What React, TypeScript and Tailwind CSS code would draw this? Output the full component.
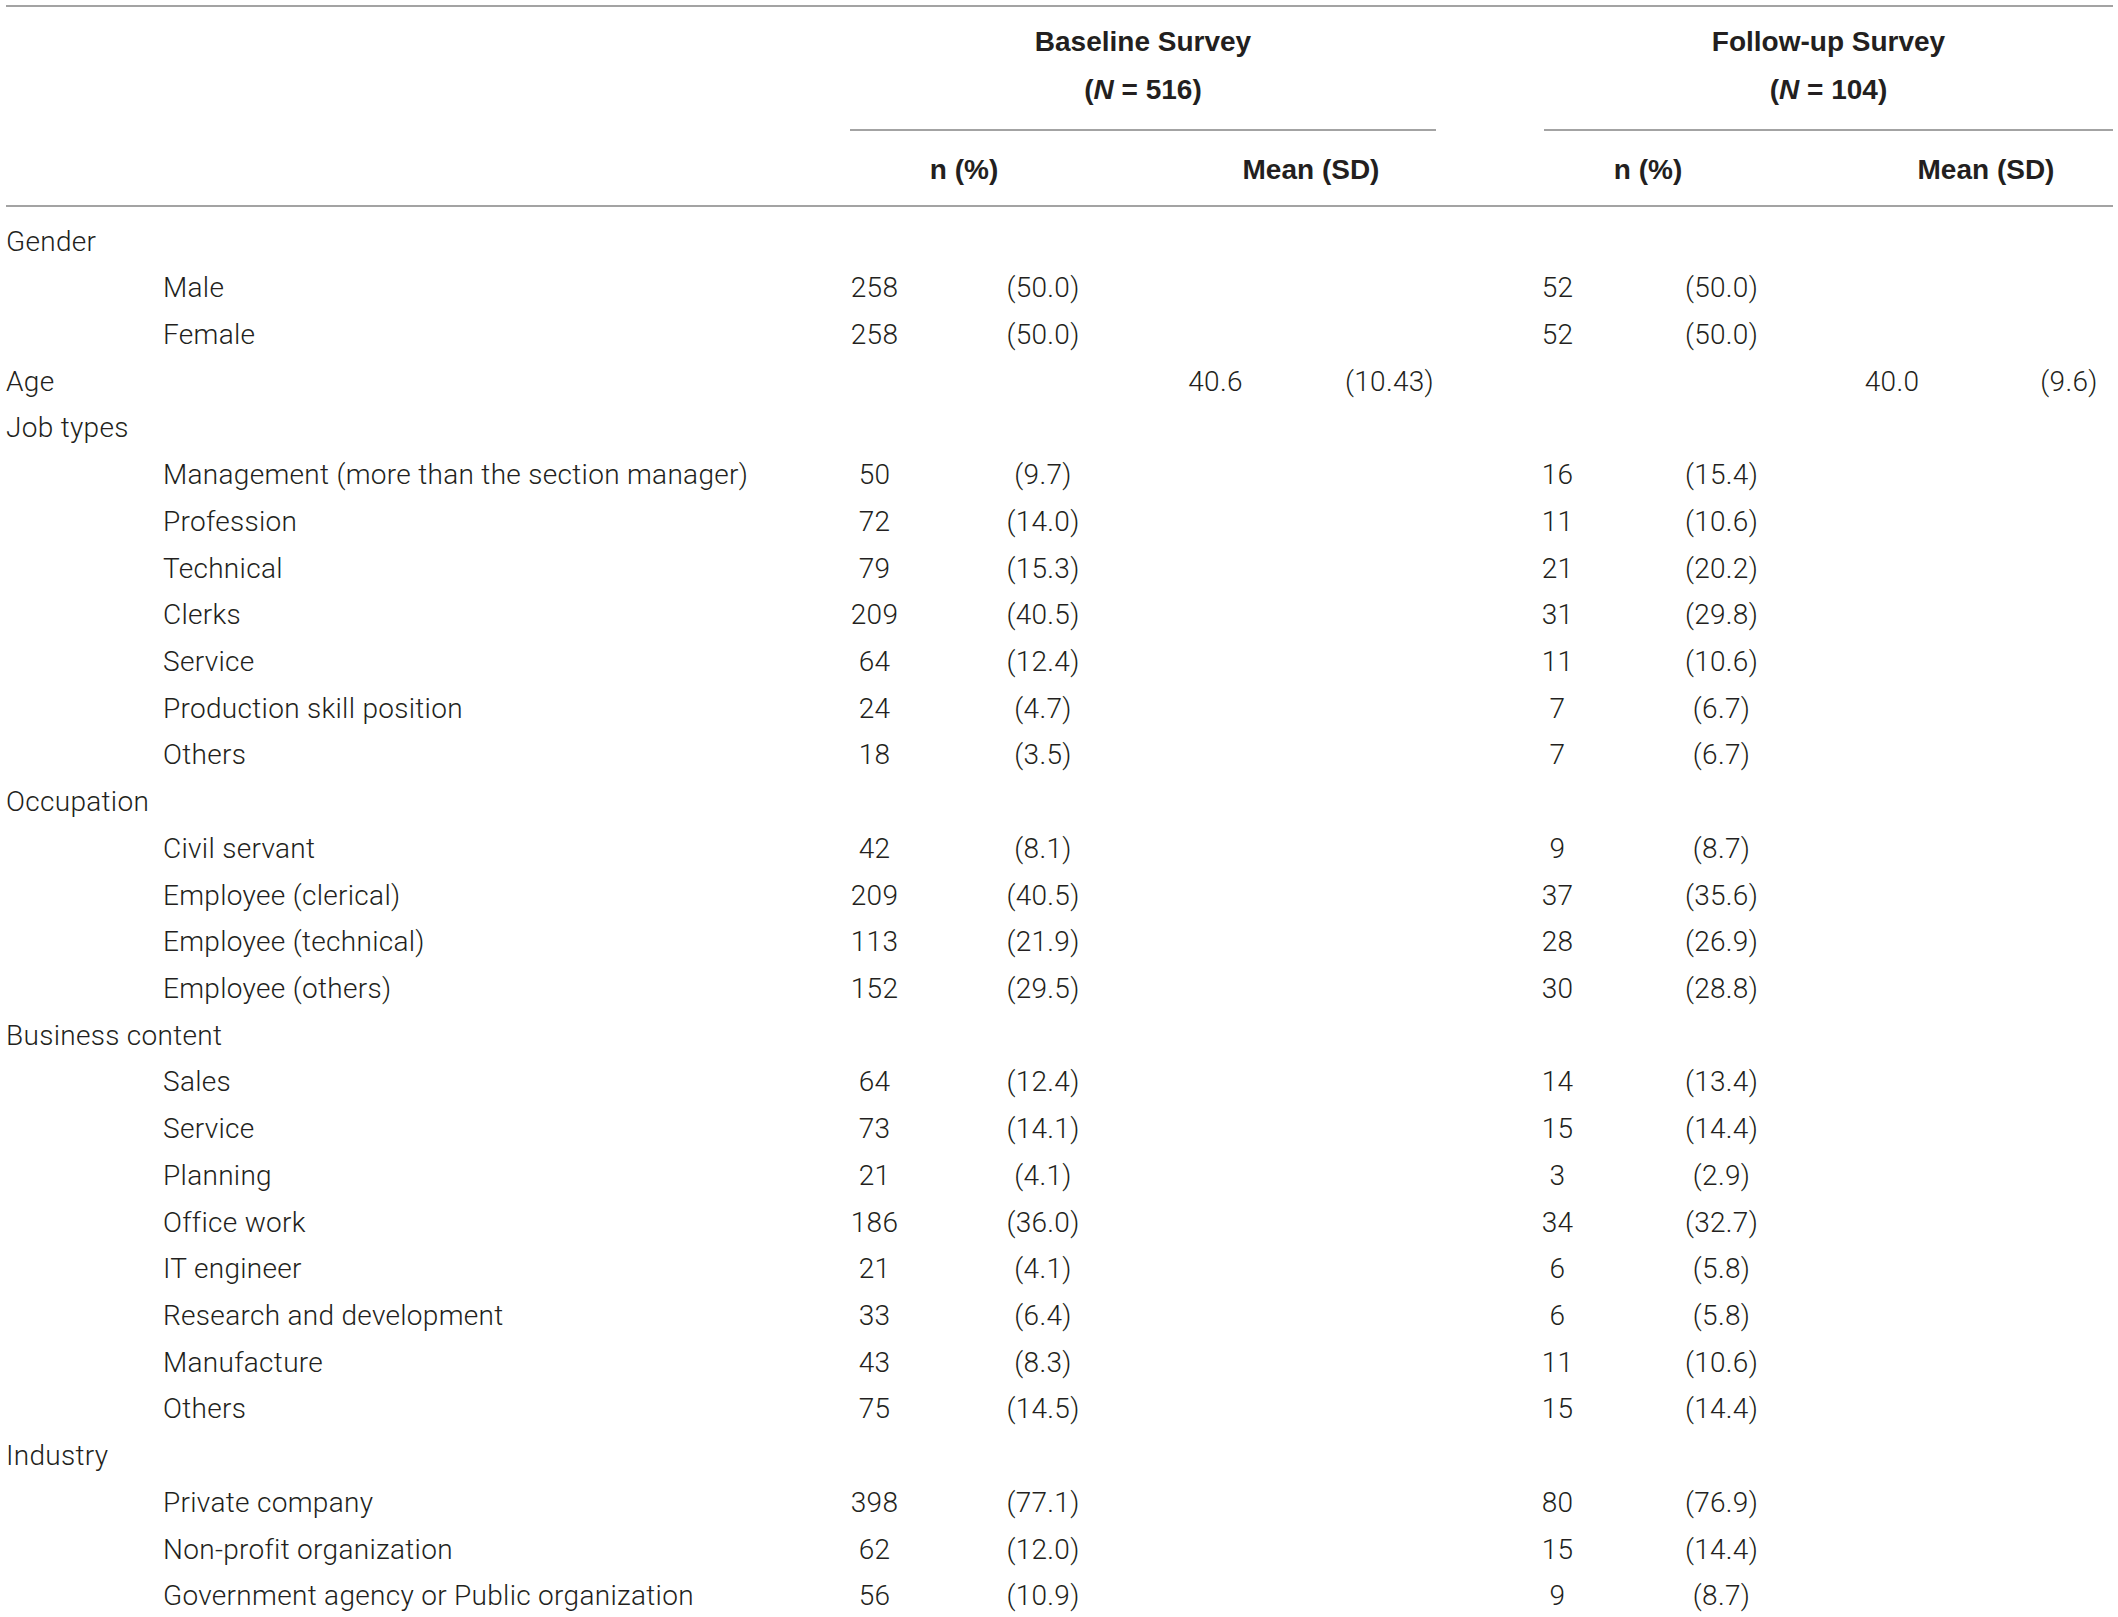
import React from "react";

// one grid template shared by header and body so columns line up
const cols =
  "grid grid-cols-[791px_167px_170px_175px_173px_163px_165px_176px_138px]";

type Row = {
  label: string;
  sub?: boolean;
  b?: [string, string];
  bm?: [string, string];
  f?: [string, string];
  fm?: [string, string];
};

const rows: Row[] = [
  { label: "Gender" },
  { label: "Male", sub: true, b: ["258", "(50.0)"], f: ["52", "(50.0)"] },
  { label: "Female", sub: true, b: ["258", "(50.0)"], f: ["52", "(50.0)"] },
  { label: "Age", bm: ["40.6", "(10.43)"], fm: ["40.0", "(9.6)"] },
  { label: "Job types" },
  { label: "Management (more than the section manager)", sub: true, b: ["50", "(9.7)"], f: ["16", "(15.4)"] },
  { label: "Profession", sub: true, b: ["72", "(14.0)"], f: ["11", "(10.6)"] },
  { label: "Technical", sub: true, b: ["79", "(15.3)"], f: ["21", "(20.2)"] },
  { label: "Clerks", sub: true, b: ["209", "(40.5)"], f: ["31", "(29.8)"] },
  { label: "Service", sub: true, b: ["64", "(12.4)"], f: ["11", "(10.6)"] },
  { label: "Production skill position", sub: true, b: ["24", "(4.7)"], f: ["7", "(6.7)"] },
  { label: "Others", sub: true, b: ["18", "(3.5)"], f: ["7", "(6.7)"] },
  { label: "Occupation" },
  { label: "Civil servant", sub: true, b: ["42", "(8.1)"], f: ["9", "(8.7)"] },
  { label: "Employee (clerical)", sub: true, b: ["209", "(40.5)"], f: ["37", "(35.6)"] },
  { label: "Employee (technical)", sub: true, b: ["113", "(21.9)"], f: ["28", "(26.9)"] },
  { label: "Employee (others)", sub: true, b: ["152", "(29.5)"], f: ["30", "(28.8)"] },
  { label: "Business content" },
  { label: "Sales", sub: true, b: ["64", "(12.4)"], f: ["14", "(13.4)"] },
  { label: "Service", sub: true, b: ["73", "(14.1)"], f: ["15", "(14.4)"] },
  { label: "Planning", sub: true, b: ["21", "(4.1)"], f: ["3", "(2.9)"] },
  { label: "Office work", sub: true, b: ["186", "(36.0)"], f: ["34", "(32.7)"] },
  { label: "IT engineer", sub: true, b: ["21", "(4.1)"], f: ["6", "(5.8)"] },
  { label: "Research and development", sub: true, b: ["33", "(6.4)"], f: ["6", "(5.8)"] },
  { label: "Manufacture", sub: true, b: ["43", "(8.3)"], f: ["11", "(10.6)"] },
  { label: "Others", sub: true, b: ["75", "(14.5)"], f: ["15", "(14.4)"] },
  { label: "Industry" },
  { label: "Private company", sub: true, b: ["398", "(77.1)"], f: ["80", "(76.9)"] },
  { label: "Non-profit organization", sub: true, b: ["62", "(12.0)"], f: ["15", "(14.4)"] },
  { label: "Government agency or Public organization", sub: true, b: ["56", "(10.9)"], f: ["9", "(8.7)"] },
];

const Rule = () => <div className="h-[2px] bg-[#a3a3a3] ml-[6px] mr-[5px]" />;

const head = "font-['Liberation_Sans',Arial,sans-serif] font-bold tracking-normal leading-[48px]";

const App = () => {
  return (
    <div className="w-[2118px] min-h-[1617px] bg-white text-[#231f20] text-[28px] font-['Roboto',sans-serif] font-light tracking-[0.3px] pt-[5px]">
      <Rule />

      {/* group titles */}
      <div className={cols + " pt-[11px] " + head}>
        <div />
        <div className="col-span-4 ml-[59px] mr-[40px] text-center">
          <div>Baseline Survey</div>
          <div>
            (<span className="italic">N</span> = 516)
          </div>
          <div className="h-[2px] bg-[#a3a3a3] mt-[15px]" />
        </div>
        <div className="col-span-4 ml-[68px] mr-[5px] text-center">
          <div>Follow-up Survey</div>
          <div>
            (<span className="italic">N</span> = 104)
          </div>
          <div className="h-[2px] bg-[#a3a3a3] mt-[15px]" />
        </div>
      </div>

      {/* sub headers */}
      <div className={cols + " mt-[15px] mb-[11px] text-center " + head}>
        <div />
        <div className="col-span-2 pl-[9px]">n (%)</div>
        <div className="col-span-2 pl-[18px]">Mean (SD)</div>
        <div className="col-span-2 pl-[16px]">n (%)</div>
        <div className="col-span-2 pl-[50px]">Mean (SD)</div>
      </div>

      <Rule />

      <div className="pt-[11.5px]">
        {rows.map((r, i) => (
          <div key={i} className={cols + " leading-[46.72px] text-center"}>
            <div className={"text-left whitespace-nowrap " + (r.sub ? "pl-[163px]" : "pl-[6px]")}>
              {r.label}
            </div>
            <div>{r.b?.[0]}</div>
            <div>{r.b?.[1]}</div>
            <div>{r.bm?.[0]}</div>
            <div>{r.bm?.[1]}</div>
            <div>{r.f?.[0]}</div>
            <div>{r.f?.[1]}</div>
            <div>{r.fm?.[0]}</div>
            <div className="pl-[40px]">{r.fm?.[1]}</div>
          </div>
        ))}
      </div>
    </div>
  );
};

export default App;
